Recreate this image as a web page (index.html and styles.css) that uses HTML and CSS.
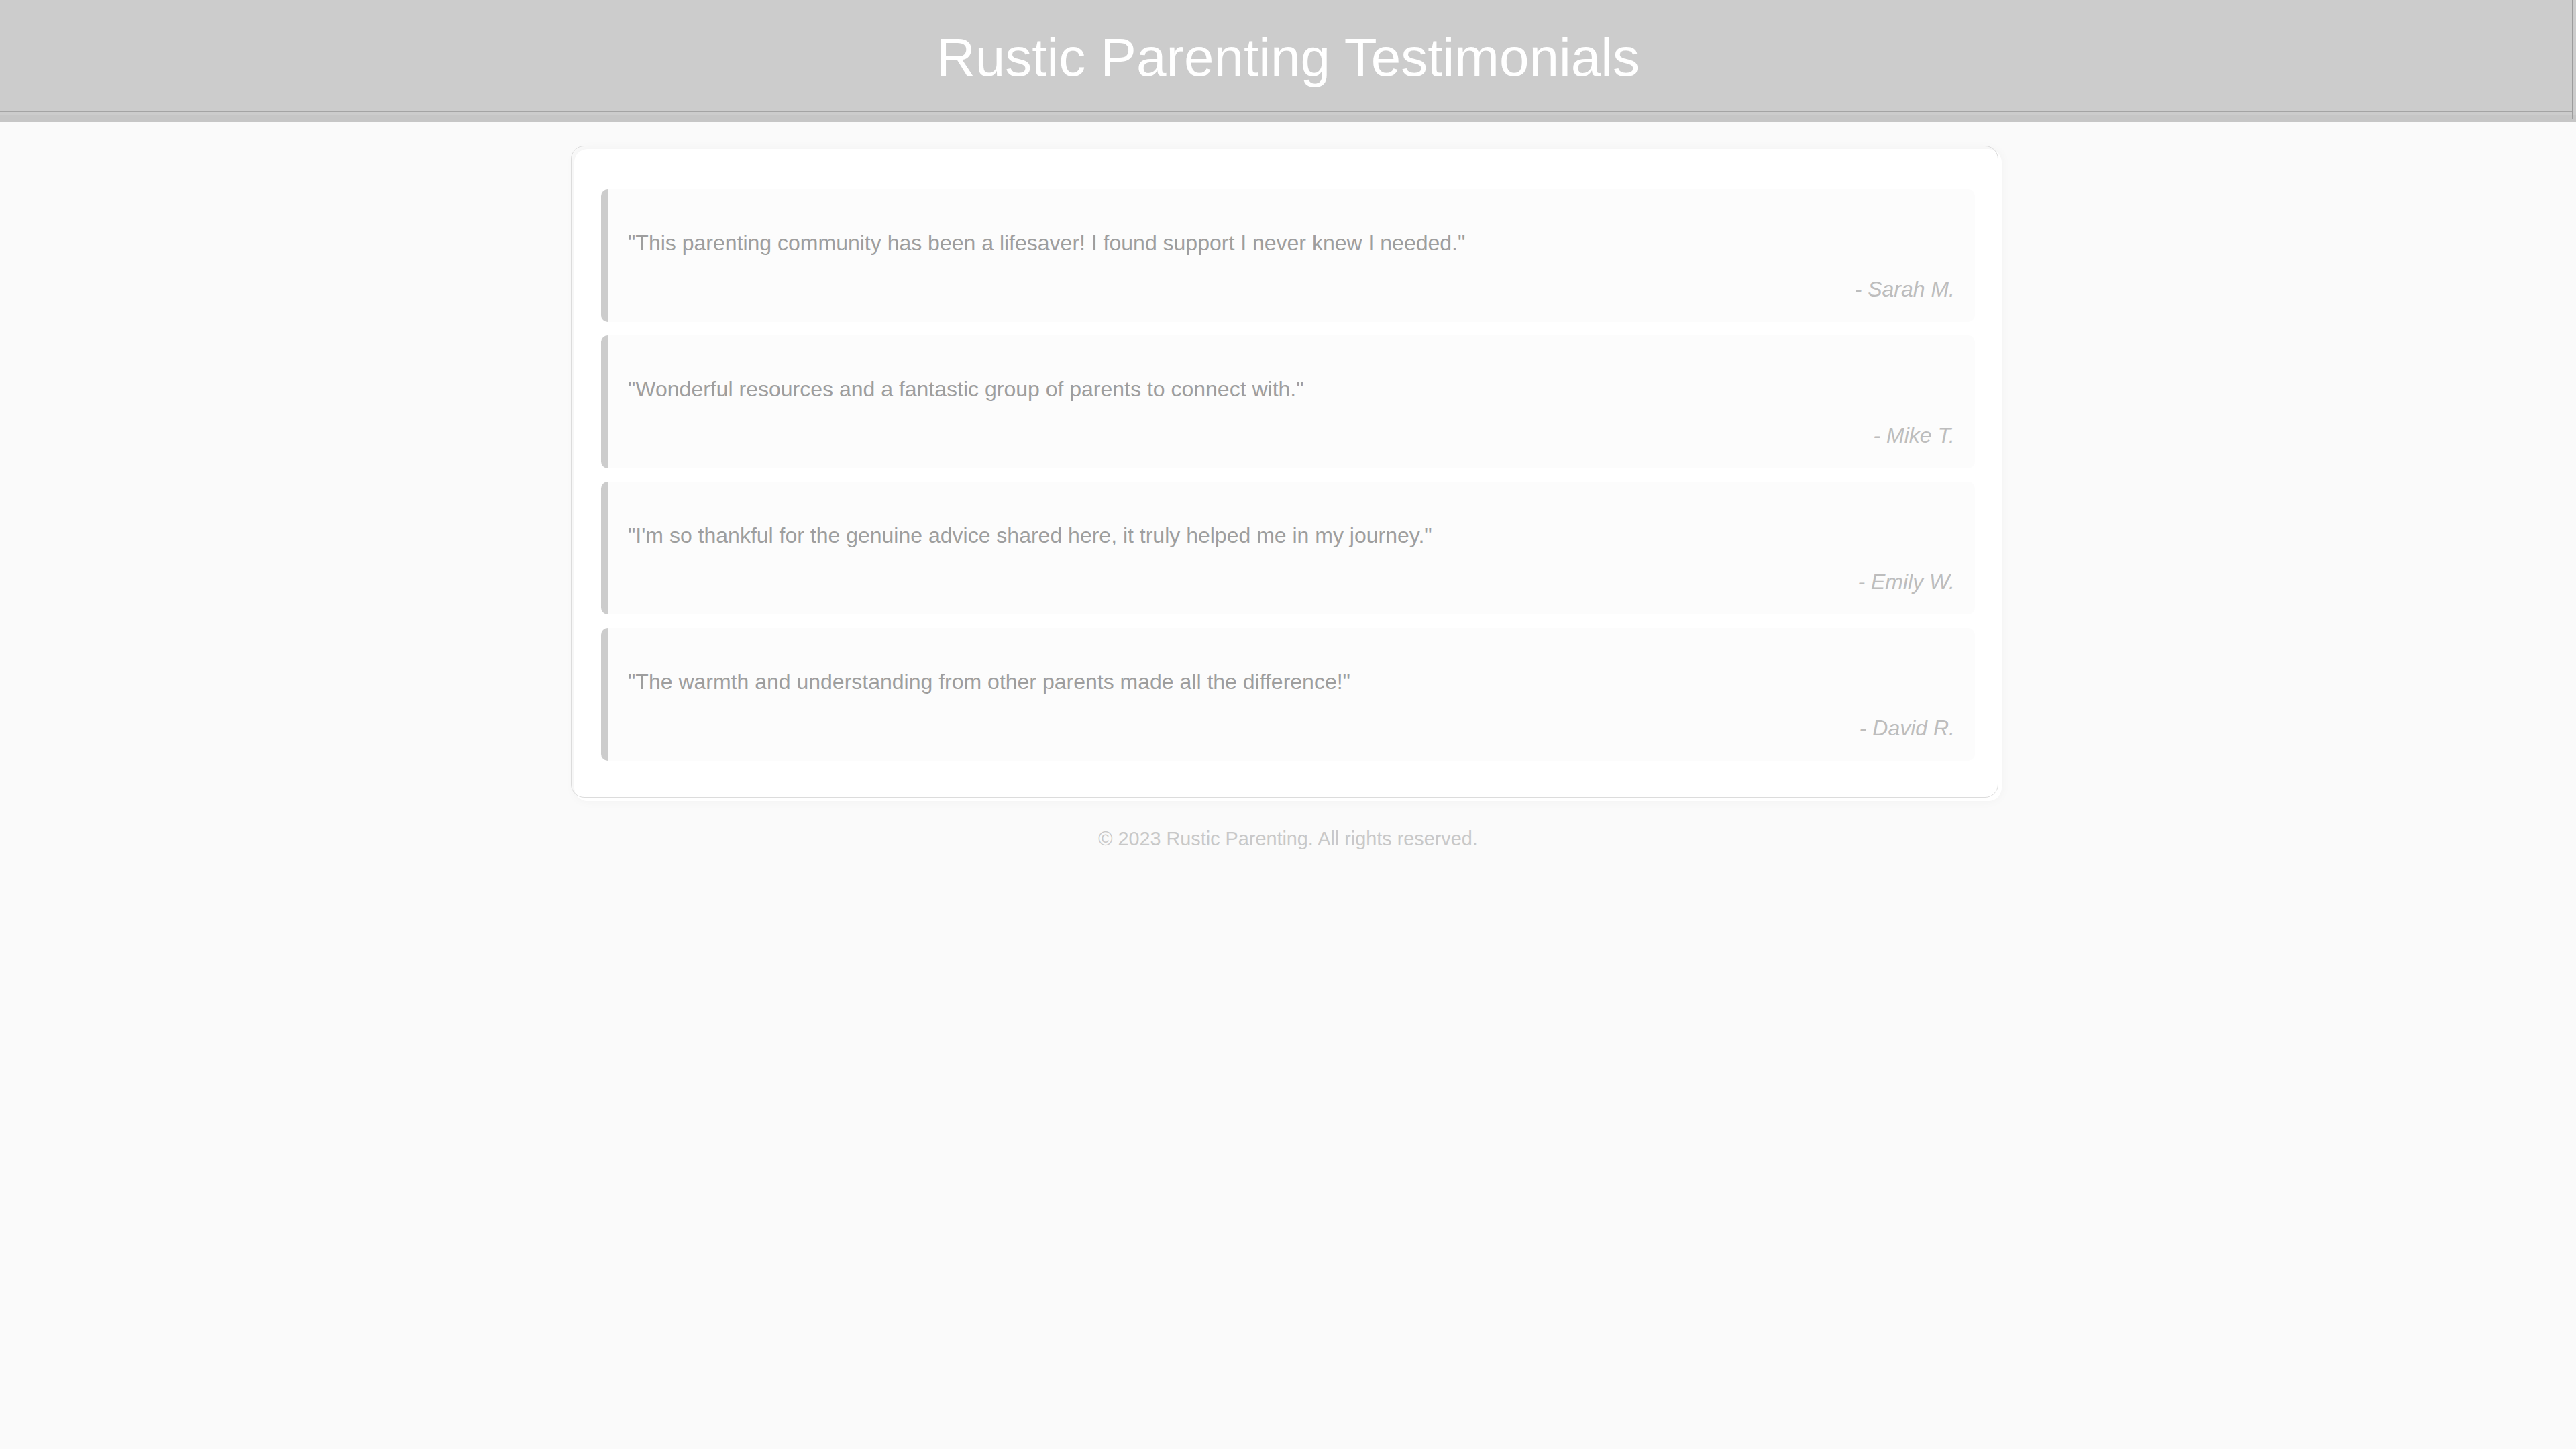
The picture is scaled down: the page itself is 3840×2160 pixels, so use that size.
FILE: index.html
```html
<!DOCTYPE html>
<html lang="en">
<head>
<meta charset="utf-8">
<title>Rustic Parenting Testimonials</title>
<link rel="stylesheet" href="styles.css">
</head>
<body>
<header class="site-header">
  <h1 class="title">Rustic Parenting Testimonials</h1>
</header>
<main class="page">
  <section class="card">
    <div class="testimonial">
      <p class="quote">"This parenting community has been a lifesaver! I found support I never knew I needed."</p>
      <p class="author">- Sarah M.</p>
    </div>
    <div class="testimonial">
      <p class="quote">"Wonderful resources and a fantastic group of parents to connect with."</p>
      <p class="author">- Mike T.</p>
    </div>
    <div class="testimonial">
      <p class="quote">"I'm so thankful for the genuine advice shared here, it truly helped me in my journey."</p>
      <p class="author">- Emily W.</p>
    </div>
    <div class="testimonial">
      <p class="quote">"The warmth and understanding from other parents made all the difference!"</p>
      <p class="author">- David R.</p>
    </div>
  </section>
</main>
<footer class="site-footer">© 2023 Rustic Parenting. All rights reserved.</footer>
</body>
</html>
```
FILE: styles.css
```css
html, body {
  margin: 0;
  padding: 0;
}
body {
  background: #fafafa;
  font-family: "Liberation Sans", Arial, sans-serif;
  font-size: 32px;
  color: #999999;
}
.site-header {
  position: relative;
  background: #cccccc;
  padding: 40px 0;
  border-bottom: 10px solid #c6c6c6;
  text-align: center;
}
.site-header::before {
  content: "";
  position: absolute;
  top: 166px;
  left: 0;
  width: 3834px;
  height: 1px;
  background: #a4a4a4;
}
.site-header::after {
  content: "";
  position: absolute;
  top: 0;
  left: 3834px;
  width: 1px;
  height: 177px;
  background: #9c9c9c;
}
.title {
  margin: 0;
  font-size: 80px;
  font-weight: normal;
  color: #ffffff;
}
.page {
  padding: 40px 0 0;
}
.card {
  position: relative;
  width: 2128px;
  margin: 0 auto;
  box-sizing: border-box;
  padding: 40px;
  background: #ffffff;
  border-radius: 20px;
  box-shadow: 0 0 16px rgba(0, 0, 0, 0.04);
}
.card::before {
  content: "";
  position: absolute;
  top: -5px;
  left: -5px;
  width: 100%;
  height: 100%;
  box-sizing: border-box;
  border: 1px solid #dcdcdc;
  border-radius: 20px;
  pointer-events: none;
}
.testimonial {
  margin: 20px 0;
  padding: 30px;
  background: #fcfcfc;
  border-left: 10px solid #cccccc;
  border-radius: 10px;
}
.quote {
  margin: 32px 0;
  color: #9e9e9e;
}
.author {
  margin: 0;
  text-align: right;
  font-style: italic;
  color: #bdbdbd;
}
.site-footer {
  padding: 40px 0;
  text-align: center;
  font-size: 28.8px;
  color: #c8c8c8;
}
```
